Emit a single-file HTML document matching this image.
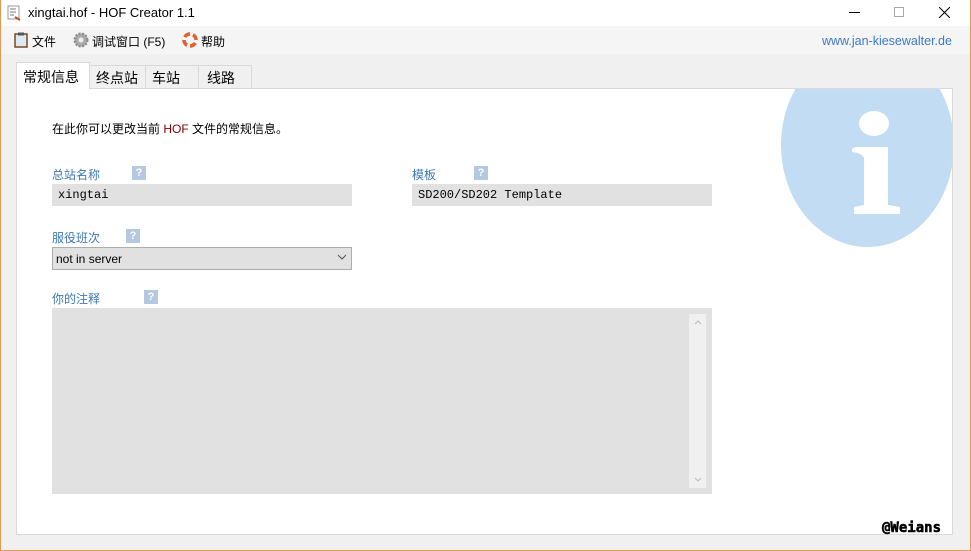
<!DOCTYPE html>
<html><head><meta charset="utf-8"><style>
*{margin:0;padding:0;box-sizing:border-box}
body{width:971px;height:551px;overflow:hidden;background:#f0f0f0;font-family:"Liberation Sans","Noto Sans CJK SC",sans-serif;font-size:12px;color:#000;position:relative}
.abs{position:absolute}
.frame{position:absolute;left:0;top:0;width:971px;height:551px;border:1px solid #e39a56;border-top:none}
.title{left:1px;top:0;width:969px;height:26px;background:#fff}
.menu{left:1px;top:26px;width:969px;height:28px;background:#f5f5f5}
.panel{left:16px;top:88px;width:937px;height:447px;background:#fff;border:1px solid #d9d9d9;overflow:hidden}
.tab{top:65px;height:23px;border:1px solid #d9d9d9;border-bottom:none;background:#f0f0f0;font-size:14px;padding:2px 0 0 6px}
.lbl{color:#3c78b4;font-size:12px}
.q{width:14px;height:14px;background:#b4c8e0;color:#fff;font-weight:bold;font-size:11px;text-align:center;line-height:14px}
.fld{background:#e1e1e1;font-family:"Liberation Mono",monospace;font-size:12px;padding:4px 6px}
</style></head><body>
<div class="abs title"></div>
<svg class="abs" style="left:6px;top:5px" width="16" height="16"><rect x="2" y="1" width="11" height="13" fill="#fff" stroke="#999"/><path d="M4 4h6M4 7h6M4 10h4" stroke="#777"/><path d="M9 12l5 3" stroke="#c05020" stroke-width="2"/></svg>
<div class="abs" style="left:28px;top:5px;font-size:13px">xingtai.hof - HOF Creator 1.1</div>
<div class="abs" style="left:849px;top:12px;width:11px;height:1px;background:#000"></div>
<div class="abs" style="left:894px;top:7px;width:10px;height:10px;border:1px solid #aaa"></div>
<svg class="abs" style="left:939px;top:7px" width="11" height="11"><path d="M0 0L11 11M11 0L0 11" stroke="#000"/></svg>
<div class="abs menu"></div>
<svg class="abs" style="left:14px;top:32px" width="14" height="16"><rect x="1" y="2" width="12" height="13" fill="#dde8f5" stroke="#7a4a1a" stroke-width="1.5"/><rect x="4" y="0.5" width="6" height="3" fill="#555"/></svg>
<div class="abs" style="left:32px;top:33px">文件</div>
<svg class="abs" style="left:73px;top:32px" width="16" height="16"><circle cx="8" cy="8" r="6.5" fill="#aaa" stroke="#888" stroke-width="2" stroke-dasharray="2 1.5"/><circle cx="8" cy="8" r="2.5" fill="#eee"/></svg>
<div class="abs" style="left:92px;top:33px">调试窗口 (F5)</div>
<svg class="abs" style="left:182px;top:32px" width="16" height="16"><circle cx="8" cy="8" r="6" fill="none" stroke="#e06030" stroke-width="3.5"/><circle cx="8" cy="8" r="6" fill="none" stroke="#fff" stroke-width="3.5" stroke-dasharray="3 6.4"/></svg>
<div class="abs" style="left:201px;top:33px">帮助</div>
<div class="abs" style="left:822px;top:34px;color:#3c78c8;font-size:12.5px">www.jan-kiesewalter.de</div>
<div class="abs panel">
 <div class="abs" style="left:764px;top:-46px;width:173px;height:204px;border-radius:50%;background:#c2ddf3"></div>
 <div class="abs" style="left:842px;top:22px;width:30px;height:25px;border-radius:50%;background:#fff"></div>
 <svg class="abs" style="left:835px;top:55px" width="50" height="72"><path d="M0 6Q0 3 6 3L36 3L36 61L48 63L48 70L2 70L2 63L12 61L12 14Q10 9 0 8z" fill="#fff"/></svg>
 <div class="abs" style="left:35px;top:31px">在此你可以更改当前 <span style="color:#800000">HOF</span> 文件的常规信息。</div>
 <div class="abs lbl" style="left:35px;top:77px">总站名称</div>
 <div class="abs q" style="left:115px;top:77px">?</div>
 <div class="abs fld" style="left:35px;top:95px;width:300px;height:22px">xingtai</div>
 <div class="abs lbl" style="left:395px;top:77px">模板</div>
 <div class="abs q" style="left:457px;top:77px">?</div>
 <div class="abs fld" style="left:395px;top:95px;width:300px;height:22px">SD200/SD202 Template</div>
 <div class="abs lbl" style="left:35px;top:140px">服役班次</div>
 <div class="abs q" style="left:109px;top:140px">?</div>
 <div class="abs" style="left:35px;top:158px;width:300px;height:23px;background:#e1e1e1;border:1px solid #adadad;padding:4px 3px;font-size:12px">not in server</div>
 <svg class="abs" style="left:320px;top:165px" width="10" height="6"><path d="M1 1l4 4 4-4" fill="none" stroke="#555"/></svg>
 <div class="abs lbl" style="left:35px;top:201px">你的注释</div>
 <div class="abs q" style="left:127px;top:201px">?</div>
 <div class="abs" style="left:35px;top:219px;width:660px;height:186px;background:#e1e1e1"></div>
 <div class="abs" style="left:672px;top:225px;width:17px;height:174px;background:#f0f0f0"></div>
 <svg class="abs" style="left:676px;top:229px" width="10" height="170"><path d="M2 6l3-3 3 3M2 160l3 3 3-3" fill="none" stroke="#bbb"/></svg>
</div>
<div class="abs tab" style="left:16px;top:62px;height:27px;background:#fff;z-index:2;width:74px;padding-top:4px">常规信息</div>
<div class="abs tab" style="left:89px;width:57px">终点站</div>
<div class="abs tab" style="left:145px;width:54px">车站</div>
<div class="abs tab" style="left:198px;width:54px;padding-left:8px">线路</div>
<div class="abs" style="left:882px;top:520px;font-family:'DejaVu Sans Mono',monospace;font-weight:bold;font-size:14px;color:#000;-webkit-text-stroke:0.5px #000;text-shadow:0 0 1px #fff">@Weians</div>
<div class="frame"></div>
</body></html>
